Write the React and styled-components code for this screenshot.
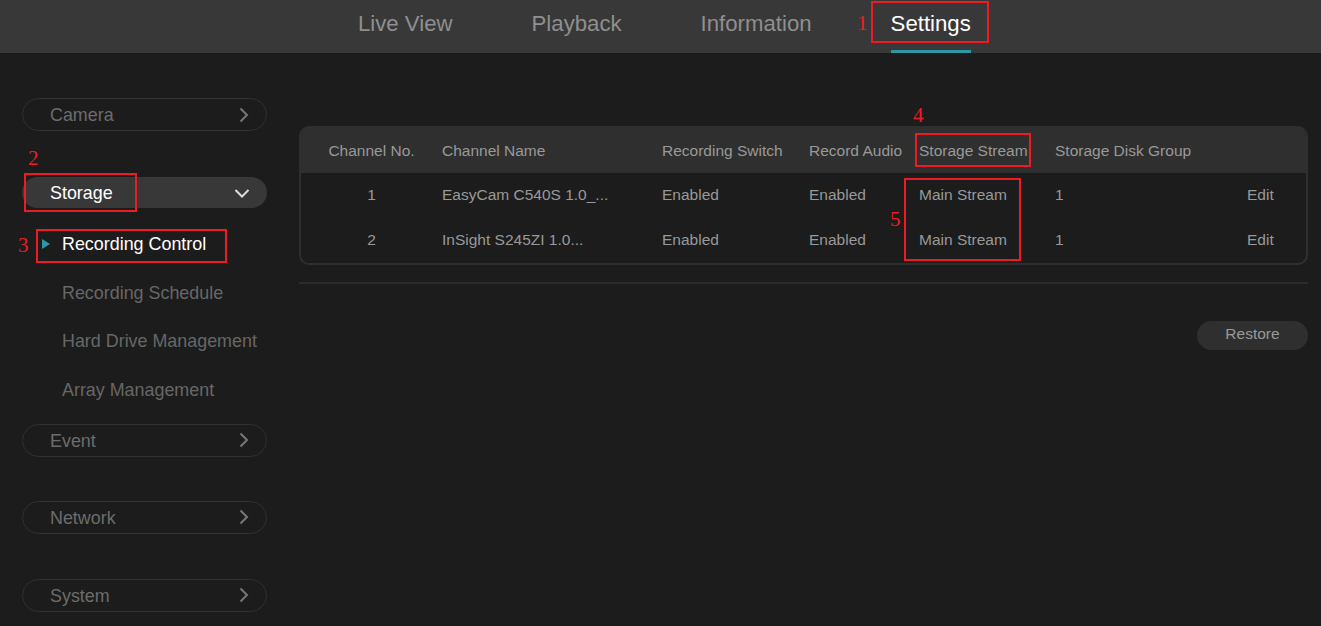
import React from 'react'
import styled, { createGlobalStyle } from 'styled-components'

const GlobalStyle = createGlobalStyle`
html,body{
  margin:0;
  padding:0;
  height:100%;
  overflow:hidden;
  background:#1c1c1c;
}
#root{
  height:100%;
}
`;

const Page = styled.div`
position:relative;
width:1321px;
height:626px;
overflow:hidden;
background:#1c1c1c;
font-family:"Liberation Sans",Arial,sans-serif;
`;

const TopBar = styled.div`
display:flex;
height:53px;
background:#383838;
padding-left:358px;
box-sizing:border-box;
`;
const Tab = styled.div`
position:relative;
font-size:22.2px;
line-height:48px;
margin-right:${({ $gap }) => $gap}px;
color:${({ $active }) => ($active ? '#fff' : '#8f8f8f')};
height:53px;
box-sizing:border-box;
border-bottom:3px solid ${({ $active }) => ($active ? '#2a99a3' : 'transparent')};
`;

const Body = styled.div`
display:flex;
`;
const Sidebar = styled.div`
display:flex;
flex-direction:column;
width:245px;
margin-left:22px;
padding-top:45px;
`;
const MenuItem = styled.div`
display:flex;
align-items:center;
justify-content:space-between;
box-sizing:border-box;
height:${({ $open }) => ($open ? 31 : 33)}px;
margin-bottom:${({ $after }) => $after}px;
padding:${({ $open }) => ($open ? '0 17px 0 28px' : '0 14px 0 27px')};
border-radius:17px;
border:${({ $open }) => ($open ? 'none' : '1px solid #303030')};
background:${({ $open }) => ($open ? '#383838' : 'transparent')};
color:${({ $open }) => ($open ? '#fff' : '#6c6c6c')};
font-size:17.9px;
`;
const MenuLabel = styled.span`
position:relative;
top:1px;
`;
const SubMenu = styled.div`
display:flex;
flex-direction:column;
margin-bottom:9.6px;
`;
const SubItem = styled.div`
position:relative;
height:48.5px;
line-height:49px;
padding-left:40px;
font-size:17.9px;
white-space:nowrap;
color:${({ $active }) => ($active ? '#fff' : '#676767')};
`;
const Marker = styled.span`
position:absolute;
left:20px;
top:19px;
width:0;
height:0;
border-left:8px solid #2a99a3;
border-top:5px solid transparent;
border-bottom:5px solid transparent;
`;

const Main = styled.div`
display:flex;
flex-direction:column;
width:1009px;
margin-left:32px;
padding-top:73px;
`;
const Table = styled.div`
box-sizing:border-box;
height:139px;
border:2px solid #2f2f2f;
border-top:none;
border-radius:10px;
overflow:hidden;
color:#999;
font-size:15.5px;
`;
const Row = styled.div`
display:grid;
grid-template-columns:141px 220px 147px 110px 136px 192px 1fr;
align-items:center;
box-sizing:border-box;
height:${({ $head }) => ($head ? 47 : 45)}px;
margin:${({ $head }) => ($head ? '0 -2px' : '0')};
padding-left:${({ $head }) => ($head ? 2 : 0)}px;
padding-top:${({ $head }) => ($head ? 2 : 0)}px;
padding-bottom:${({ $head }) => ($head ? 0 : 1)}px;
background:${({ $head }) => ($head ? '#2f2f2f' : 'transparent')};
`;
const Cell = styled.div`
white-space:nowrap;
text-align:${({ $center }) => ($center ? 'center' : 'left')};
`;
const Divider = styled.div`
height:2px;
margin-top:17px;
background:#2b2b2b;
`;
const Actions = styled.div`
display:flex;
justify-content:flex-end;
margin-top:37px;
`;
const RestoreButton = styled.div`
width:111px;
height:29px;
line-height:26px;
border-radius:15px;
background:#2f2f2f;
color:#999;
font-size:15.5px;
text-align:center;
`;

const NoteBox = styled.div`
position:absolute;
box-sizing:border-box;
left:${({ $x }) => $x}px;
top:${({ $y }) => $y}px;
width:${({ $w }) => $w}px;
height:${({ $h }) => $h}px;
border:2px solid #ed1c24;
`;
const NoteNumber = styled.div`
position:absolute;
left:${({ $x }) => $x}px;
top:${({ $y }) => $y}px;
font-family:"Liberation Serif","Times New Roman",serif;
font-size:21px;
line-height:24px;
color:#ed1c24;
`;

const Chevron = ({ down }) => (
  <svg width="16" height="16" viewBox="0 0 16 16" fill="none">
    <path
      d={down ? 'M1.5 5l6.5 6.5L14.5 5' : 'M4.5 1.5L11 8l-6.5 6.5'}
      stroke={down ? '#ddd' : '#777'}
      strokeWidth="2"
    />
  </svg>
);

const tabs = [
  { name: 'Live View', gap: 79 },
  { name: 'Playback', gap: 79 },
  { name: 'Information', gap: 79 },
  { name: 'Settings', gap: 0, active: true },
];

const columns = ['Channel No.', 'Channel Name', 'Recording Switch', 'Record Audio', 'Storage Stream', 'Storage Disk Group', ''];

const rows = [
  ['1', 'EasyCam C540S 1.0_...', 'Enabled', 'Enabled', 'Main Stream', '1', 'Edit'],
  ['2', 'InSight S245ZI 1.0...', 'Enabled', 'Enabled', 'Main Stream', '1', 'Edit'],
];

const subItems = ['Recording Control', 'Recording Schedule', 'Hard Drive Management', 'Array Management'];

const noteBoxes = [
  { x: 871, y: 1, w: 118, h: 42 },
  { x: 24, y: 173, w: 113, h: 39 },
  { x: 36, y: 229, w: 191, h: 34 },
  { x: 915, y: 133, w: 116, h: 34 },
  { x: 904, y: 178, w: 117, h: 83 },
];

const noteNumbers = [
  { n: 1, x: 857, y: 11 },
  { n: 2, x: 28, y: 146 },
  { n: 3, x: 18, y: 233 },
  { n: 4, x: 913, y: 103 },
  { n: 5, x: 890, y: 207 },
];

const App = () => {
  return (
    <Page>
      <GlobalStyle />
      <TopBar>
        {tabs.map((tab) => (
          <Tab key={tab.name} $gap={tab.gap} $active={tab.active}>{tab.name}</Tab>
        ))}
      </TopBar>
      <Body>
        <Sidebar>
          <MenuItem $after={46}><MenuLabel>Camera</MenuLabel> <Chevron /></MenuItem>
          <MenuItem $open $after={12.4}><MenuLabel>Storage</MenuLabel> <Chevron down /></MenuItem>
          <SubMenu>
            {subItems.map((item, i) => (
              <SubItem key={item} $active={i === 0}>
                {i === 0 && <Marker />}
                {item}
              </SubItem>
            ))}
          </SubMenu>
          <MenuItem $after={44}><MenuLabel>Event</MenuLabel> <Chevron /></MenuItem>
          <MenuItem $after={45}><MenuLabel>Network</MenuLabel> <Chevron /></MenuItem>
          <MenuItem $after={0}><MenuLabel>System</MenuLabel> <Chevron /></MenuItem>
        </Sidebar>
        <Main>
          <Table>
            <Row $head>
              {columns.map((col, i) => (
                <Cell key={col || 'action'} $center={i === 0}>{col}</Cell>
              ))}
            </Row>
            {rows.map((row) => (
              <Row key={row[0]}>
                {row.map((val, i) => (
                  <Cell key={i} $center={i === 0}>{val}</Cell>
                ))}
              </Row>
            ))}
          </Table>
          <Divider />
          <Actions>
            <RestoreButton>Restore</RestoreButton>
          </Actions>
        </Main>
      </Body>
      {noteBoxes.map((b) => (
        <NoteBox key={b.x} $x={b.x} $y={b.y} $w={b.w} $h={b.h} />
      ))}
      {noteNumbers.map((m) => (
        <NoteNumber key={m.n} $x={m.x} $y={m.y}>{m.n}</NoteNumber>
      ))}
    </Page>
  );
};

export default App
